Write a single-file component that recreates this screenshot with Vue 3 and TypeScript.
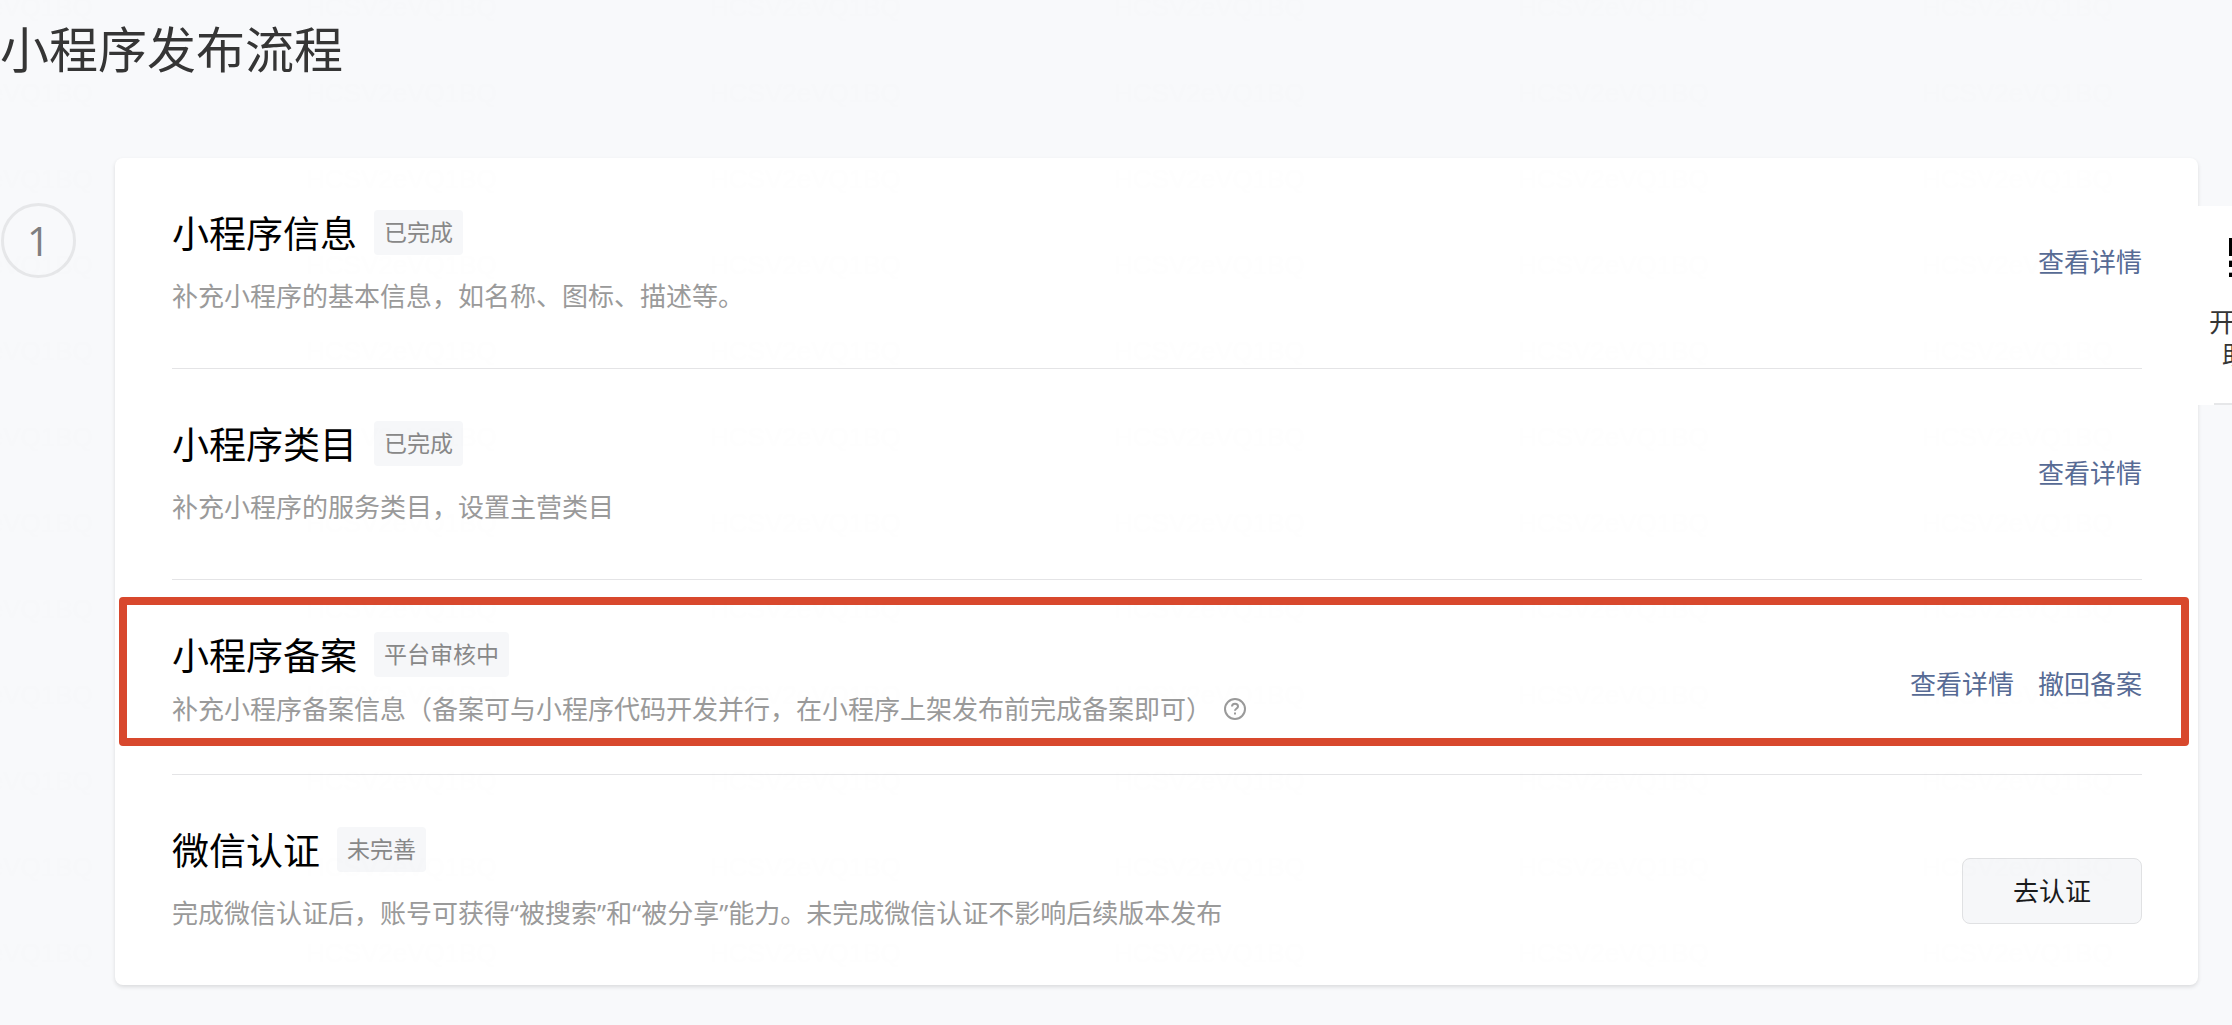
<script setup lang="ts">
interface Step {
  title: string
  status: string
  desc: string
  links?: string[]
  button?: string
  help?: boolean
  highlighted?: boolean
}

const steps: Step[] = [
  {
    title: '小程序信息',
    status: '已完成',
    desc: '补充小程序的基本信息，如名称、图标、描述等。',
    links: ['查看详情'],
  },
  {
    title: '小程序类目',
    status: '已完成',
    desc: '补充小程序的服务类目，设置主营类目',
    links: ['查看详情'],
  },
  {
    title: '小程序备案',
    status: '平台审核中',
    desc: '补充小程序备案信息（备案可与小程序代码开发并行，在小程序上架发布前完成备案即可）',
    links: ['查看详情', '撤回备案'],
    help: true,
    highlighted: true,
  },
  {
    title: '微信认证',
    status: '未完善',
    desc: '完成微信认证后，账号可获得“被搜索”和“被分享”能力。未完成微信认证不影响后续版本发布',
    button: '去认证',
  },
]
</script>

<template>
  <div class="page">
    <h1 class="page-title">小程序发布流程</h1>

    <main class="flow">
      <div class="rail"><span class="step-number">1</span></div>

      <section class="card">
        <article
          v-for="step in steps"
          :key="step.title"
          class="step"
          :class="{ highlighted: step.highlighted }"
        >
          <div class="info">
            <div class="head">
              <h2>{{ step.title }}</h2>
              <span class="tag">{{ step.status }}</span>
            </div>
            <p class="desc">
              <span>{{ step.desc }}</span>
              <svg v-if="step.help" class="help" viewBox="0 0 22 22" aria-hidden="true">
                <circle cx="11" cy="11" r="10" />
                <path d="M8 8.6C8 6.8 9.3 5.8 11 5.8s3 1 3 2.6c0 2-3 2.1-3 4.4" />
                <path d="M11 14.4v2" />
              </svg>
            </p>
          </div>
          <div class="actions" :class="{ 'with-button': step.button }">
            <a v-for="link in step.links" :key="link" href="#">{{ link }}</a>
            <button v-if="step.button" type="button">{{ step.button }}</button>
          </div>
        </article>
      </section>
    </main>

    <aside class="side-panel">
      <svg class="code-icon" viewBox="0 0 3 40" aria-hidden="true">
        <path d="M0 0h3v18H0zM0 23h3v6H0zM0 35h3v4H0z" fill="#000" />
        <path d="M0 22h3v1H0zM0 34h3v1H0z" fill="#aaa" />
      </svg>
      <span class="side-line">开</span>
      <span class="side-line indent">助</span>
      <span class="side-rule"></span>
    </aside>

    <svg class="watermark" aria-hidden="true">
      <defs>
        <pattern id="mark" x="306" y="-12" width="404" height="86" patternUnits="userSpaceOnUse">
          <text x="0" y="28">HCSV2eVQ1BQ</text>
        </pattern>
      </defs>
      <rect width="100%" height="100%" fill="url(#mark)" />
    </svg>
  </div>
</template>

<style>
body {
  margin: 0;
  background: #f8f9fb;
}
</style>

<style scoped>
.page {
  position: relative;
  box-sizing: border-box;
  min-height: 100vh;
  padding-bottom: 40px;
  overflow: hidden;
  background: #f8f9fb;
  font-family: "Open Sans", "Noto Sans CJK SC", sans-serif;
  font-size: 26px;
  line-height: 36px;
}

.page-title {
  margin: 0;
  padding: 17px 0 77px;
  color: #353535;
  font-size: 49px;
  font-weight: 400;
  line-height: 64px;
}

.flow {
  display: flex;
  padding-right: 34px;
}

.rail {
  flex: 0 0 115px;
  box-sizing: border-box;
  padding: 45px 0 0 1px;
}

.step-number {
  display: flex;
  align-items: center;
  justify-content: center;
  box-sizing: border-box;
  width: 75px;
  height: 75px;
  border: 3px solid #e6e7e9;
  border-radius: 50%;
  color: #7f7f80;
  font-size: 40px;
}

.card {
  flex: 1;
  padding: 0 56px 0 57px;
  border-radius: 8px;
  background: #fff;
  box-shadow: 0 2px 4px rgba(0, 0, 0, 0.12);
}

.step {
  position: relative;
  display: flex;
  justify-content: space-between;
  padding: 52px 0 54px;
  border-bottom: 1px solid #e4e4e6;
}

.step:last-child {
  border-bottom: 0;
}

.step.highlighted {
  padding-bottom: 38px;
}

.step.highlighted::before {
  content: "";
  position: absolute;
  inset: 17px -47px 28px -53px;
  border: 8px solid #d8482d;
  border-radius: 4px;
  pointer-events: none;
}

.head {
  display: flex;
  align-items: center;
  gap: 17px;
  height: 45px;
}

h2 {
  margin: 0;
  padding-top: 2px;
  color: #000;
  font-size: 37px;
  font-weight: 400;
  line-height: 45px;
}

.tag {
  padding: 0 10px;
  border-radius: 4px;
  background: #f6f7f9;
  color: #888;
  font-size: 23px;
  line-height: 45px;
}

.desc {
  display: flex;
  align-items: center;
  gap: 12px;
  margin: 23px 0 0;
  color: #9a9a9a;
}

.highlighted .desc {
  margin-top: 14px;
}

.help {
  width: 22px;
  height: 22px;
  fill: none;
  stroke: #9a9a9a;
  stroke-width: 2;
}

.actions {
  display: flex;
  align-items: center;
  gap: 24px;
  box-sizing: border-box;
  height: 104px;
}

.actions.with-button {
  padding-top: 24px;
}

.actions a {
  color: #576b95;
  text-decoration: none;
}

.actions button {
  width: 180px;
  height: 66px;
  padding: 0;
  border: 1px solid #e0e1e3;
  border-radius: 8px;
  background: #f6f7f9;
  color: #1a1b1c;
  font: inherit;
}

.side-panel {
  position: absolute;
  top: 206px;
  right: 0;
  display: flex;
  flex-direction: column;
  box-sizing: border-box;
  width: 36px;
  height: 199px;
  padding-top: 32px;
  overflow: hidden;
  background: #fff;
  color: #353535;
}

.code-icon {
  align-self: flex-end;
  width: 3px;
  height: 40px;
  margin-bottom: 28px;
}

.side-line {
  padding-left: 13px;
  line-height: 33px;
}

.side-line.indent {
  padding-left: 26px;
}

.side-rule {
  height: 2px;
  margin: auto 0 0 18px;
  background: #e6e7e9;
}

.watermark {
  position: absolute;
  inset: 0;
  width: 100%;
  height: 100%;
  pointer-events: none;
}

.watermark text {
  fill: rgba(0, 0, 0, 0.004);
  font-family: "Liberation Sans", sans-serif;
  font-size: 26px;
}
</style>
